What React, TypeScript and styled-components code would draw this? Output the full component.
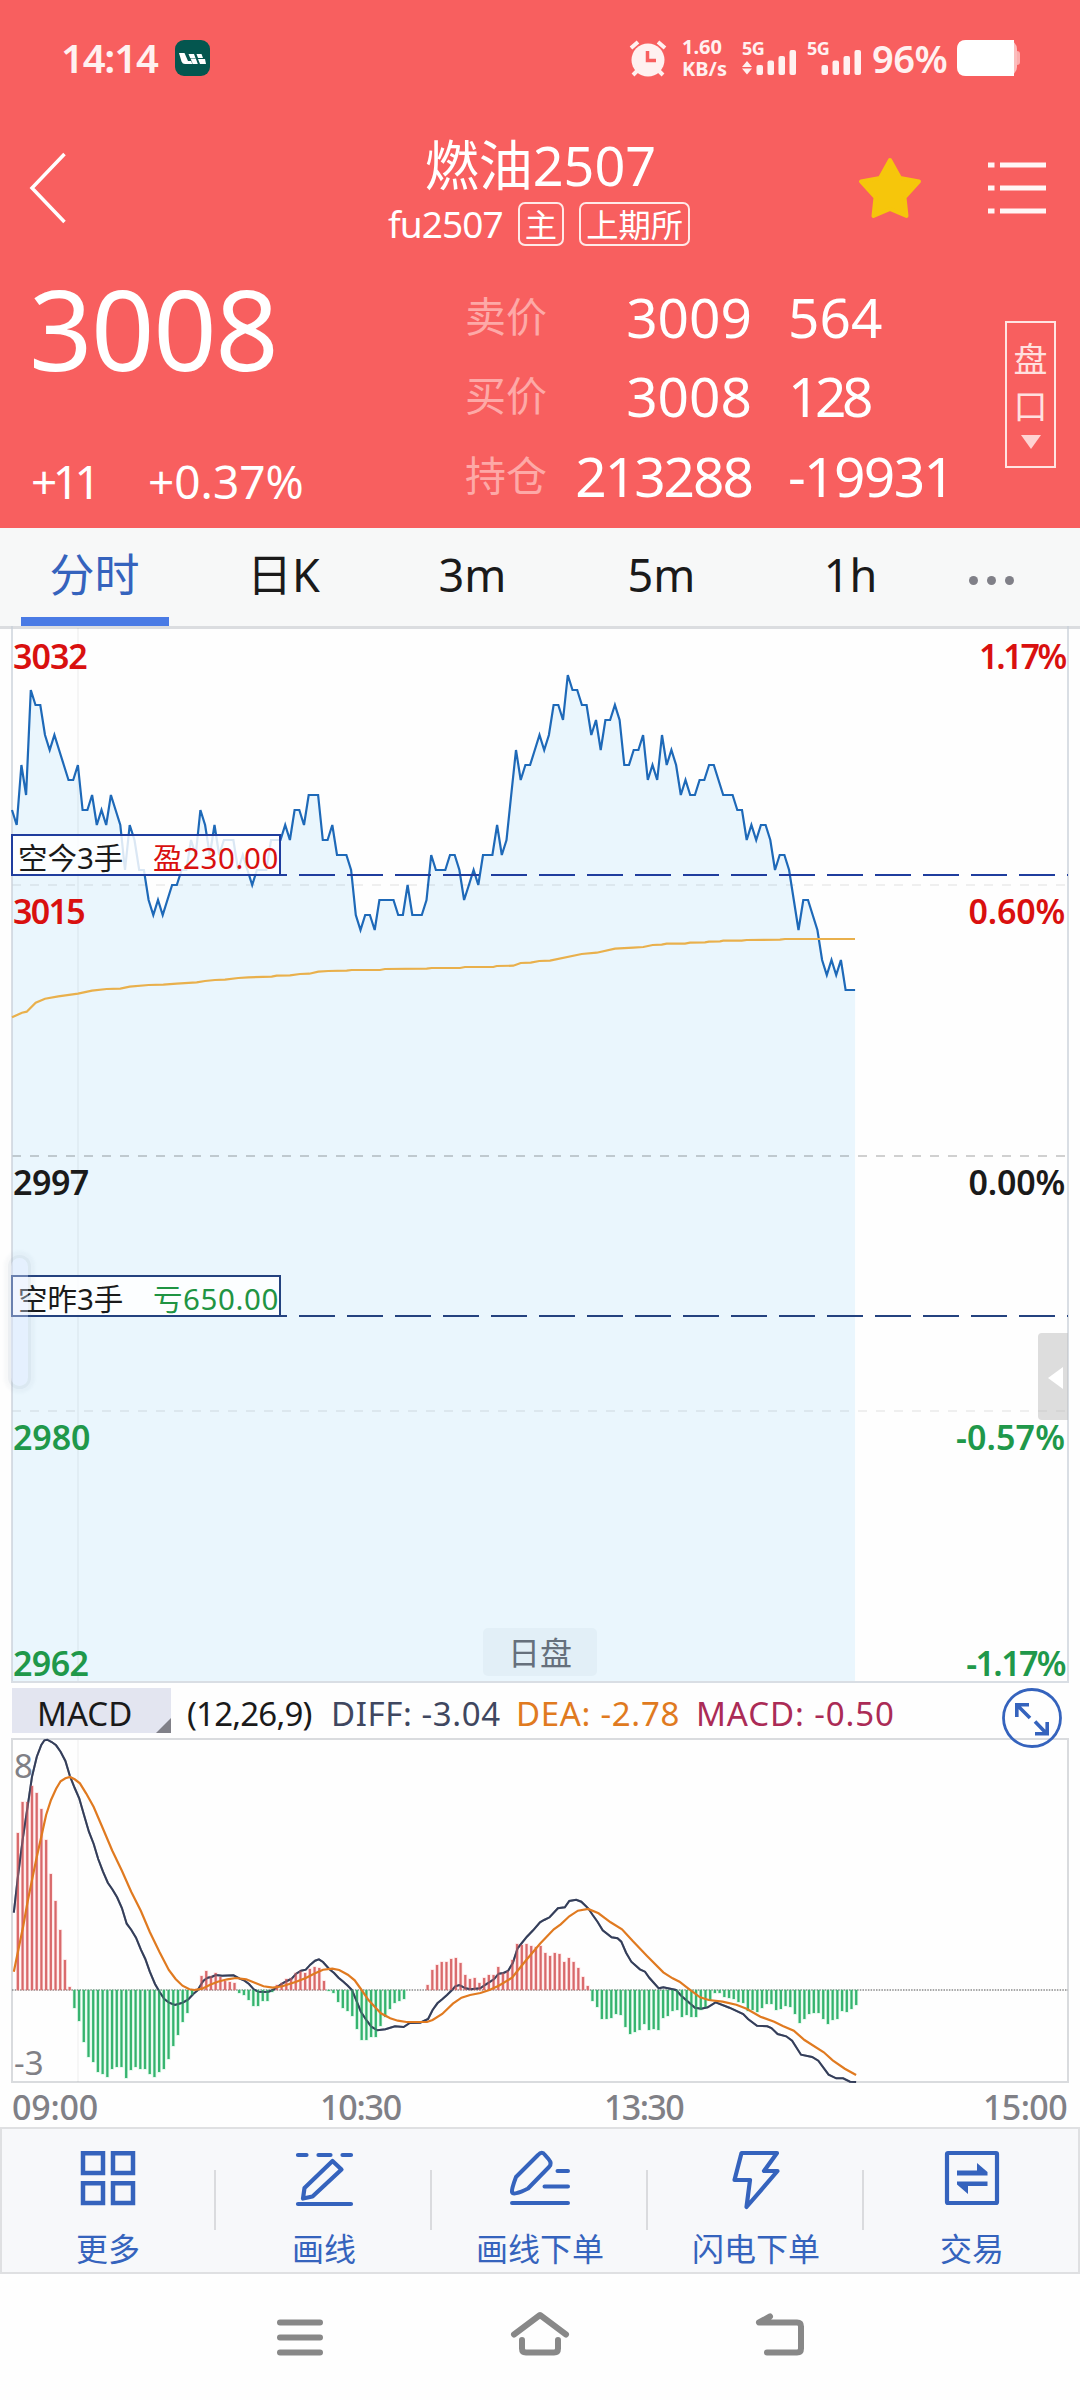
import React from 'react';
import styled, { createGlobalStyle } from 'styled-components';

const sans = '"Noto Sans", "Noto Sans CJK SC", sans-serif';
const red = '#f85f5f';
const blue = '#3563bd';

const GlobalStyle = createGlobalStyle`
  * { box-sizing: border-box; }
  body { margin: 0; background: #fff; font-family: ${sans}; }
`;

const Screen = styled.div`
  width: 1080px;
  height: 2400px;
  display: flex;
  flex-direction: column;
  background: #fefefe;
  overflow: hidden;
  white-space: nowrap;
`;

const Header = styled.header`
  height: 528px;
  flex: none;
  background: ${red};
  color: #fff;
`;

/* ---------- status bar ---------- */

const StatusBar = styled.div`
  height: 116px;
  padding: 0 60px 0 61px;
  display: flex;
  align-items: center;
  color: #fff1f0;
`;

const Clock = styled.div`
  width: 114px;
  font-size: 40px;
  line-height: 44px;
  font-weight: 600;
  letter-spacing: -1.2px;
`;

const StatusIcons = styled.div`
  margin-left: auto;
  display: flex;
  align-items: center;
`;

const NetSpeed = styled.div`
  width: 44px;
  margin: 0 16px 0 15px;
  display: flex;
  flex-direction: column;
  font-size: 20px;
  line-height: 22px;
  font-weight: 700;
`;

const Signal = styled.div`
  width: 55px;
  height: 38px;
  margin-right: 10px;
  display: flex;
  flex-direction: column;
`;

const SignalLabel = styled.span`
  font-size: 18px;
  line-height: 18px;
  height: 10px;
  font-weight: 700;
  letter-spacing: -0.5px;
`;

const Percent = styled.div`
  width: 85px;
  font-size: 38px;
  line-height: 40px;
  font-weight: 600;
  letter-spacing: -0.5px;
`;

/* ---------- title ---------- */

const TitleBar = styled.div`
  height: 143px;
  padding: 0 34px 0 29px;
  display: grid;
  grid-template-columns: 1fr auto 1fr;
  align-items: center;
`;

const Titles = styled.div`
  display: flex;
  flex-direction: column;
  align-items: center;
  gap: 6px;
  padding: 5px 0 0 5px;
`;

const Title = styled.h1`
  margin: 0 0 0 1px;
  font-size: 54px;
  line-height: 61px;
  font-weight: 400;
`;

const Subtitle = styled.div`
  display: flex;
  align-items: center;
  gap: 15px;
  height: 44px;
  margin-right: 2px;
  font-size: 37px;
  line-height: 44px;
  letter-spacing: -0.9px;
`;

const Badge = styled.span`
  height: 44px;
  padding: 0 5px;
  border: 2px solid #ffe9e8;
  border-radius: 7px;
  font-size: 32.3px;
  line-height: 40px;
  letter-spacing: 0;
`;

const TitleActions = styled.div`
  display: flex;
  justify-content: flex-end;
  align-items: center;
  gap: 66px;
`;

/* ---------- quote ---------- */

const Quote = styled.div`
  height: 269px;
  padding: 0 24px 0 31px;
  display: grid;
  grid-template-columns: 434px 540px 51px;
`;

const PriceColumn = styled.div`
  display: flex;
  flex-direction: column;
`;

const LastPrice = styled.div`
  font-size: 111px;
  line-height: 120px;
  margin: 9px 0 0 -2px;
  letter-spacing: -1.4px;
`;

const Changes = styled.div`
  display: flex;
  margin-top: 63px;
  font-size: 46px;
  line-height: 60px;
`;

const Change = styled.span<{ $width?: number; $tracking?: number }>`
  width: ${(p) => (p.$width ? `${p.$width}px` : 'auto')};
  letter-spacing: ${(p) => p.$tracking ?? 0}px;
`;

const QuoteRows = styled.div`
  padding-top: 18px;
  display: grid;
  grid-template-rows: 79px 79px 81px;
`;

const QuoteRow = styled.div`
  display: grid;
  grid-template-columns: 100px 187px 1fr;
  align-items: center;
  font-size: 55px;
  line-height: 60px;
`;

const QuoteLabel = styled.span`
  font-size: 41px;
  line-height: 50px;
  padding-bottom: 2px;
  color: #fda9a7;
`;

const QuoteValue = styled.span<{ $tracking?: number }>`
  text-align: right;
  letter-spacing: ${(p) => p.$tracking ?? 0}px;
`;

const QuoteVolume = styled.span<{ $tracking?: number }>`
  padding-left: 36px;
  letter-spacing: ${(p) => p.$tracking ?? 0}px;
`;

const DepthButton = styled.button`
  margin: 62px 0 0;
  padding: 13px 0 0;
  width: 51px;
  height: 147px;
  border: 2px solid #ffe4e3;
  background: none;
  color: #ffe0df;
  font-family: inherit;
  font-size: 34px;
  line-height: 47px;
  display: flex;
  flex-direction: column;
  align-items: center;
`;

const DownTriangle = styled.i`
  margin-top: 5px;
  border: 10px solid transparent;
  border-top: 14px solid #ffd3d2;
  border-bottom: 0;
`;

/* ---------- tabs ---------- */

const Tabs = styled.nav`
  height: 98px;
  flex: none;
  display: grid;
  grid-template-columns: repeat(5, 189px) 93px;
  background: #f7f8f8;
`;

const Tab = styled.div<{ $active?: boolean }>`
  display: flex;
  flex-direction: column;
  align-items: center;
  justify-content: space-between;
  padding-top: 15px;
  font-size: 45px;
  line-height: 64px;
  color: ${(p) => (p.$active ? blue : '#1a1a1a')};
  &::after {
    content: '';
    width: 148px;
    height: 9px;
    background: ${(p) => (p.$active ? '#4a7be5' : 'transparent')};
  }
`;

const MoreTab = styled.div`
  display: flex;
  align-items: center;
  justify-content: center;
  gap: 9px;
  padding-top: 7px;
`;

const Dot = styled.i`
  width: 9px;
  height: 9px;
  border-radius: 50%;
  background: #808088;
`;

/* ---------- price chart ---------- */

const Chart = styled.section<{ $height: number }>`
  position: relative;
  flex: none;
  height: ${(p) => p.$height}px;
`;

const Plot = styled.svg`
  display: block;
`;

const AxisLabels = styled.div`
  position: absolute;
  inset: 13px 15px 0 13px;
  display: grid;
  grid-template-rows: 255px 271px 255px 226px 40px;
`;

const AxisRow = styled.div<{ $color: string }>`
  display: flex;
  justify-content: space-between;
  font-size: 34px;
  line-height: 34px;
  font-weight: 600;
  color: ${(p) => p.$color};
`;

const AxisText = styled.span<{ $tracking: number }>`
  letter-spacing: ${(p) => p.$tracking - 0.3}px;
`;

const PositionTag = styled.div<{ $top: number; $color: string }>`
  position: absolute;
  left: 11px;
  top: ${(p) => p.$top}px;
  width: 270px;
  height: 42px;
  display: flex;
  justify-content: space-between;
  padding: 2px 0 0 5px;
  border: 2px solid ${(p) => p.$color};
  background: rgba(255, 255, 255, 0.84);
  font-size: 29.5px;
  line-height: 40px;
  color: #1a1a1a;
`;

const Profit = styled.span<{ $color: string }>`
  letter-spacing: 0.6px;
  color: ${(p) => p.$color};
`;

const SessionTag = styled.div`
  position: absolute;
  left: 483px;
  bottom: 8px;
  width: 114px;
  height: 48px;
  border-radius: 5px;
  background: #e2eff7;
  color: #66707c;
  font-size: 32px;
  line-height: 50px;
  text-align: center;
`;

const PanelHandle = styled.div`
  position: absolute;
  right: 12px;
  top: 707px;
  width: 30px;
  height: 87px;
  border-radius: 4px 0 0 4px;
  background: rgba(190, 190, 190, 0.52);
  display: flex;
  align-items: center;
  justify-content: center;
  padding-left: 4px;
  padding-top: 2px;
`;

const LeftTriangle = styled.i`
  border: 11px solid transparent;
  border-right: 15px solid #fff;
  border-left: 0;
`;

const EdgeHandle = styled.div`
  position: absolute;
  left: 11px;
  top: 632px;
  width: 17px;
  height: 128px;
  border-radius: 9px;
  background: rgba(222, 232, 254, 0.38);
  box-shadow: 0 0 0 3px rgba(120, 140, 160, 0.08), 0 0 3px 7px rgba(120, 140, 160, 0.05);
`;

/* ---------- MACD ---------- */

const IndicatorBar = styled.div`
  position: relative;
  flex: none;
  height: 54px;
  padding: 4px 0 5px 12px;
  display: flex;
  font-size: 33px;
  line-height: 52px;
`;

const IndicatorButton = styled.div`
  width: 159px;
  height: 45px;
  padding-left: 25px;
  background: #e3e5f0;
  color: #1a1a1a;
  display: flex;
  justify-content: space-between;
`;

const CornerTriangle = styled.i`
  align-self: flex-end;
  border-bottom: 15px solid #808088;
  border-left: 15px solid transparent;
`;

const IndicatorValue = styled.span<{ $color: string; $width: number; $tracking: number }>`
  width: ${(p) => p.$width}px;
  letter-spacing: ${(p) => p.$tracking}px;
  color: ${(p) => p.$color};
`;

const ParamValue = styled(IndicatorValue)`
  padding-left: 16px;
`;

const ExpandButton = styled.div`
  position: absolute;
  left: 1001px;
  top: 3px;
  z-index: 1;
`;

const ScaleLabels = styled.div`
  position: absolute;
  inset: 11px auto 4px 14px;
  display: flex;
  flex-direction: column;
  justify-content: space-between;
  font-size: 33px;
  line-height: 34px;
  color: #808086;
`;

const TimeAxis = styled.div`
  flex: none;
  height: 43px;
  padding: 2px 13px 0 12px;
  display: grid;
  grid-template-columns: 308px 284px 1fr auto;
  font-size: 34px;
  line-height: 43px;
  font-weight: 500;
  color: #808086;
`;

const TimeLabel = styled.span<{ $tracking: number }>`
  letter-spacing: ${(p) => p.$tracking}px;
`;

/* ---------- bottom bars ---------- */

const Toolbar = styled.nav`
  flex: none;
  height: 147px;
  box-shadow: inset 0 0 0 2px #dfe0e2;
  background: #f7f8fa;
  display: grid;
  grid-template-columns: repeat(5, 1fr);
`;

const Tool = styled.div`
  display: flex;
  flex-direction: column;
  align-items: center;
  padding-top: 19px;
  color: ${blue};
  font-size: 32px;
  line-height: 40px;
  background: linear-gradient(#dadbde, #dadbde) right 43px / 2px 60px no-repeat;
  &:last-child { background: none; }
`;

const ToolLabel = styled.span`
  margin-top: 17px;
`;

const SystemNav = styled.div`
  flex: 1;
  display: grid;
  grid-template-columns: repeat(3, 240px);
  justify-content: center;
  justify-items: center;
  padding-top: 32px;
`;

/* ---------- data ---------- */

const LEFT = 12;
const STEP = 1055 / 224;

/* ticks below the session high (3029), one per minute */
const ticks = [
  9, 10, 6, 8, 1, 2, 2, 4, 5, 4, 5, 6, 7, 7, 6, 9, 9, 8, 10, 9, 10, 8, 9, 10, 13, 10, 11, 13, 13, 15,
  16, 15, 16, 15, 14, 14, 13, 13, 11, 12, 9, 10, 12, 10, 12, 11, 11, 11, 13, 12, 13, 14, 13, 13, 13, 11, 11, 11, 10, 11,
  9, 9, 10, 8, 8, 8, 11, 11, 10, 12, 12, 12, 13, 16, 17, 16, 16, 17, 15, 15, 15, 15, 16, 16, 14, 16, 16, 16, 15, 12,
  13, 13, 13, 12, 12, 13, 15, 14, 13, 14, 12, 12, 12, 10, 12, 11, 8, 5, 7, 6, 6, 5, 4, 5, 4, 2, 2, 3, 0, 1,
  1, 2, 2, 4, 3, 5, 3, 3, 2, 3, 6, 6, 5, 5, 4, 7, 6, 7, 4, 6, 5, 6, 8, 7, 8, 8, 7, 7, 6, 6,
  7, 8, 8, 8, 9, 9, 11, 10, 11, 10, 10, 11, 13, 12, 12, 13, 15, 17, 15, 15, 16, 17, 19, 20, 19, 20, 19, 21, 21, 21,
];

const average = [
  [36, 1192], [66, 1178], [80, 1175], [107, 1148], [135, 1136], [175, 1129], [234, 1121], [276, 1112], [320, 1107],
  [361, 1106], [389, 1100], [446, 1095], [490, 1094], [530, 1091], [590, 1087], [615, 1083], [645, 1080], [675, 1079],
  [715, 1074], [745, 1072], [815, 1070], [830, 1067], [870, 1066], [900, 1062], [928, 1061], [955, 1055], [985, 1053],
  [1040, 1052], [1055, 1050], [1140, 1050], [1155, 1047], [1280, 1046], [1295, 1044], [1380, 1044], [1395, 1041],
  [1480, 1041], [1490, 1038], [1540, 1037], [1562, 1029], [1592, 1028], [1618, 1023], [1650, 1022], [1745, 1002],
  [1790, 998], [1845, 986], [1900, 983], [1930, 981], [1958, 975], [1985, 974], [2000, 971], [2055, 971], [2070, 968],
  [2115, 967], [2127, 965], [2160, 964], [2170, 962], [2225, 962], [2240, 960], [2340, 959], [2355, 957], [2565, 957],
];

/* histogram heights in pixels, positive above the zero line */
const bars = [
  157, 188, 188, 204, 197, 181, 150, 116, 89, 60, 30, 3, -18, -31, -52, -67, -72, -82, -84, -87, -79, -77, -77, -88,
  -80, -77, -79, -79, -84, -87, -82, -79, -69, -56, -45, -32, -23, -5, 1, 14, 19, 14, 17, 13, 9, 8, 7, -3, -5, -10,
  -16, -16, -11, -11, -2, 5, 7, 11, 12, 17, 19, 17, 21, 23, 22, 9, -1, -3, -12, -18, -21, -26, -39, -50, -50, -47,
  -47, -36, -27, -19, -13, -11, -9, 0, 0, 0, 0, 5, 20, 25, 28, 28, 31, 32, 27, 15, 11, 12, 7, 12, 15, 15, 23, 17, 19,
  30, 46, 45, 46, 44, 43, 44, 37, 34, 37, 36, 28, 32, 28, 22, 13, 4, -11, -17, -29, -29, -28, -24, -25, -37, -44,
  -42, -40, -34, -40, -39, -40, -28, -26, -21, -20, -27, -25, -27, -27, -20, -17, -10, -3, -3, -7, -8, -9, -12, -13,
  -21, -20, -22, -18, -14, -14, -20, -19, -16, -17, -24, -33, -29, -24, -23, -23, -29, -34, -30, -29, -21, -22, -19,
  -15,
];

const diff = [
  [40, 698], [53, 580], [67, 470], [80, 380], [93, 290], [107, 230], [120, 195], [129, 181], [137, 179], [150, 186],
  [163, 196], [176, 215], [190, 243], [203, 288], [217, 324], [230, 355], [244, 405], [258, 455], [272, 492],
  [285, 537], [299, 575], [313, 608], [326, 628], [340, 652], [354, 684], [368, 731], [381, 749], [395, 773],
  [409, 809], [422, 837], [435, 875], [450, 912], [463, 935], [477, 957], [491, 968], [508, 975], [530, 968],
  [546, 959], [562, 941], [573, 932], [590, 903], [603, 893], [614, 891], [627, 885], [645, 887], [678, 886],
  [696, 896], [710, 902], [723, 912], [737, 928], [750, 935], [778, 936], [792, 930], [806, 920], [819, 911],
  [833, 903], [847, 896], [860, 881], [874, 872], [888, 869], [901, 854], [915, 842], [926, 838], [938, 846],
  [956, 867], [970, 879], [983, 893], [997, 905], [1010, 917], [1022, 930], [1035, 962], [1048, 995], [1065, 1022],
  [1078, 1040], [1096, 1051], [1119, 1048], [1147, 1039], [1172, 1041], [1190, 1029], [1220, 1028], [1243, 1017],
  [1256, 990], [1270, 970], [1284, 958], [1298, 945], [1312, 931], [1322, 919], [1334, 915], [1352, 925],
  [1366, 928], [1394, 925], [1410, 914], [1434, 898], [1448, 881], [1462, 879], [1475, 873], [1489, 849],
  [1503, 805], [1530, 770], [1548, 751], [1568, 727], [1580, 720], [1596, 712], [1620, 685], [1640, 682],
  [1653, 663], [1673, 659], [1688, 665], [1708, 685], [1721, 705], [1735, 725], [1750, 751], [1776, 772],
  [1793, 775], [1804, 785], [1818, 818], [1833, 845], [1858, 868], [1873, 875], [1886, 894], [1913, 925],
  [1926, 922], [1963, 930], [1978, 947], [2018, 983], [2036, 986], [2055, 982], [2078, 967], [2118, 983],
  [2158, 1002], [2172, 1017], [2198, 1037], [2228, 1039], [2240, 1044], [2258, 1062], [2283, 1069], [2300, 1082],
  [2326, 1124], [2358, 1131], [2376, 1142], [2406, 1184], [2428, 1195], [2448, 1195], [2468, 1205], [2486, 1206],
];

const dea = [
  [40, 875], [53, 810], [67, 740], [80, 665], [93, 600], [107, 530], [120, 470], [134, 405], [148, 360], [163, 326],
  [176, 304], [190, 295], [203, 291], [217, 298], [232, 310], [250, 340], [272, 381], [299, 446], [326, 512],
  [354, 572], [381, 635], [409, 693], [435, 756], [463, 816], [490, 870], [510, 897], [530, 917], [550, 928],
  [565, 930], [587, 926], [610, 914], [632, 905], [660, 898], [685, 894], [715, 898], [740, 908], [765, 919],
  [792, 923], [820, 919], [860, 905], [888, 894], [915, 880], [938, 869], [965, 866], [985, 870], [1010, 884],
  [1030, 901], [1050, 930], [1070, 960], [1092, 985], [1106, 1000], [1133, 1015], [1155, 1022], [1180, 1026],
  [1240, 1026], [1256, 1020], [1284, 1002], [1315, 971], [1340, 953], [1365, 945], [1395, 939], [1421, 930],
  [1448, 917], [1487, 893], [1503, 872], [1530, 838], [1568, 791], [1608, 748], [1628, 733], [1653, 709],
  [1678, 692], [1708, 687], [1738, 700], [1773, 727], [1806, 748], [1838, 784], [1878, 827], [1926, 877],
  [1953, 895], [1973, 905], [1998, 925], [2033, 952], [2058, 960], [2098, 965], [2138, 974], [2168, 986],
  [2208, 1010], [2248, 1025], [2273, 1038], [2305, 1052], [2336, 1080], [2392, 1117], [2418, 1141], [2453, 1166],
  [2486, 1185],
];

const toLine = (points: number[][], sx: number, sy: number, dy: number) =>
  points.map(([x, y]) => `${(x / sx).toFixed(1)},${(y / sy + dy).toFixed(1)}`).join(' ');

const priceLine = ticks.map((t, i) => `${(LEFT + i * STEP).toFixed(1)},${49 + t * 15}`).join(' ');

const axis = [
  { price: '3032', pct: '1.17%', color: '#d9100f', tracking: [-0.7, -2] },
  { price: '3015', pct: '0.60%', color: '#d9100f', tracking: [-1.4, 0.1] },
  { price: '2997', pct: '0.00%', color: '#1a1a1a', tracking: [-0.2, 0.1] },
  { price: '2980', pct: '-0.57%', color: '#20984a', tracking: [0.2, 0.4] },
  { price: '2962', pct: '-1.17%', color: '#20984a', tracking: [-0.3, -1.3] },
];

/* ---------- icons ---------- */

const SignalBars = ({ arrows }: { arrows?: boolean }) => (
  <svg width="55" height="26" viewBox="0 0 55 26" fill="#fff1f0">
    {arrows && <path d="M5 12l5 6H0zM5 25.500l5-6H0z" />}
    <rect x="14.500" y="16" width="6.500" height="10" rx="2" />
    <rect x="25.500" y="11.500" width="6.500" height="14.500" rx="2" />
    <rect x="36.500" y="7" width="6.500" height="19" rx="2" />
    <rect x="47.500" y="1" width="6.500" height="25" rx="2" />
  </svg>
);

const ToolIcons: Record<string, React.ReactNode> = {
  grid: <path d="M27 7.200h20v19.800H27zM57 7.200h20v19.800H57zM27 37.200h20v19.800H27zM57 37.200h20v19.800H57z" strokeWidth="4.500" />,
  draw: (
    <path
      d="M26 9h8.500M46.500 9h12M70.500 9H79M26 58h53M31 52.500l1.500-10.500L60.500 15l9 8.500L40.500 50.500z"
      strokeWidth="4.200"
    />
  ),
  drawOrder: (
    <path
      d="M24 57h56M69.500 25H80M56.500 40.500H80M24 46q-.5-3 4-15L50 9q4-4.500 7 0l3.500 4q4 4.500 .5 8L40 42.500Q25 50 24 46z"
      strokeWidth="4"
    />
  ),
  flash: <path d="M37.500 7H73L60 25h13.500L42.500 61l3.500-27H30.500z" strokeWidth="4.200" />,
  trade: (
    <>
      <rect x="27" y="7" width="50" height="50" rx="1" strokeWidth="4.200" />
      <path d="M37 24.500h20v-7.500L67.500 26v3.500H37zM67.500 40H48v8L37 38.500V35.500h30.500z" fill={blue} stroke="none" />
    </>
  ),
};

const tools = [
  { icon: 'grid', label: '更多' },
  { icon: 'draw', label: '画线' },
  { icon: 'drawOrder', label: '画线下单' },
  { icon: 'flash', label: '闪电下单' },
  { icon: 'trade', label: '交易' },
];

const navIcons = [
  'M10 16.500h40M10 31.500h40M10 46.500h40',
  'M4 28.500L30 9l26 19.500M12 34v8.500q0 4 4 4h28q4 0 4-4V34',
  'M20 10.500L9 16.500h38q4 0 4 4v22q0 4-4 4H17',
];

export default function App() {
  return (
    <>
      <GlobalStyle />
      <Screen>
        <Header>
          <StatusBar>
            <Clock>14:14</Clock>
            <svg width="35" height="36" viewBox="0 0 35 36">
              <rect width="35" height="36" rx="9" fill="#04564f" />
              <path
                d="M4 13h5.500l3.500 8h3l1.500 3H10q-2.500 0-3.500-2.500zM13.500 14h5.500l1.500 4h-5.300zM15.500 18.500h5.300l2 5.500h-5zM21.500 14h5l1.500 4h-5zM23 19h7l1 5h-6z"
                fill="#fff"
              />
            </svg>
            <StatusIcons>
              <svg width="38" height="37" viewBox="0 0 38 37" fill="none" stroke="#fff1f0">
                <circle cx="19" cy="20" r="16.500" fill="#fff1f0" stroke="none" />
                <path d="M2 8l7-6M36 8l-7-6M9 30l-5 5M29 30l5 5" strokeWidth="4" />
                <path d="M18.500 11v9.500H27" stroke={red} strokeWidth="3.500" />
              </svg>
              <NetSpeed>
                <span>1.60</span>
                <span>KB/s</span>
              </NetSpeed>
              <Signal>
                <SignalLabel>5G</SignalLabel>
                <SignalBars arrows />
              </Signal>
              <Signal>
                <SignalLabel>5G</SignalLabel>
                <SignalBars />
              </Signal>
              <Percent>96%</Percent>
              <svg width="63" height="36" viewBox="0 0 63 36">
                <rect x="52" y="11" width="11" height="14" rx="3" fill="#fcaeae" />
                <rect width="60" height="36" rx="9" fill="#fcbdbd" />
                <path d="M9 0h48v36H9q-9 0-9-9V9q0-9 9-9z" fill="#fff" />
              </svg>
            </StatusIcons>
          </StatusBar>

          <TitleBar>
            <svg width="38" height="72" viewBox="0 0 38 72" fill="none" stroke="#fff" strokeWidth="3.500">
              <path d="M35.500 2L3 36l32.500 34" />
            </svg>
            <Titles>
              <Title>燃油2507</Title>
              <Subtitle>
                fu2507<Badge>主</Badge>
                <Badge>上期所</Badge>
              </Subtitle>
            </Titles>
            <TitleActions>
              <svg width="64" height="62" viewBox="0 0 64 62">
                <path
                  d="M32 3l10 18 19 3.500-14.500 16L48.500 59 32 52 15.500 59l2-18.500L3 24.500 22 21z"
                  fill="#f6c60b"
                  stroke="#f6c60b"
                  strokeWidth="4"
                  strokeLinejoin="round"
                />
              </svg>
              <svg width="58" height="52" viewBox="0 0 58 52" stroke="#fff6f5" strokeWidth="5">
                <path d="M0 3h6.500M12 3h46M0 26h6.500M12 26h46M0 49h6.500M12 49h46" />
              </svg>
            </TitleActions>
          </TitleBar>

          <Quote>
            <PriceColumn>
              <LastPrice>3008</LastPrice>
              <Changes>
                <Change $width={117} $tracking={-4.5}>
                  +11
                </Change>
                <Change>+0.37%</Change>
              </Changes>
            </PriceColumn>
            <QuoteRows>
              <QuoteRow>
                <QuoteLabel>卖价</QuoteLabel>
                <QuoteValue>3009</QuoteValue>
                <QuoteVolume>564</QuoteVolume>
              </QuoteRow>
              <QuoteRow>
                <QuoteLabel>买价</QuoteLabel>
                <QuoteValue>3008</QuoteValue>
                <QuoteVolume $tracking={-4.5}>128</QuoteVolume>
              </QuoteRow>
              <QuoteRow>
                <QuoteLabel>持仓</QuoteLabel>
                <QuoteValue $tracking={-2}>213288</QuoteValue>
                <QuoteVolume $tracking={-1.6}>-19931</QuoteVolume>
              </QuoteRow>
            </QuoteRows>
            <DepthButton>
              <span>盘</span>
              <span>口</span>
              <DownTriangle />
            </DepthButton>
          </Quote>
        </Header>

        <Tabs>
          <Tab $active>分时</Tab>
          <Tab>日K</Tab>
          <Tab>3m</Tab>
          <Tab>5m</Tab>
          <Tab>1h</Tab>
          <MoreTab>
            <Dot />
            <Dot />
            <Dot />
          </MoreTab>
        </Tabs>

        <Chart $height={1058}>
          <Plot width="1080" height="1058" viewBox="0 0 1080 1058" fill="none">
            <path d="M0 1.500h1080" stroke="#dbdde0" strokeWidth="3" />
            <polygon points={`12,1055 ${priceLine} ${LEFT + 179 * STEP},1055`} fill="#eaf6fd" />
            <path d="M12 259h1056M12 785h1056" stroke="#000" strokeOpacity=".06" strokeWidth="2" strokeDasharray="9 9" />
            <path d="M12 530h1056" stroke="#000" strokeOpacity=".18" strokeWidth="2" strokeDasharray="9 9" />
            <path d="M78 2v1053" stroke="#000" strokeOpacity=".035" strokeWidth="2" />
            <path d="M12 0v1056h1056V0" stroke="#c9d0d8" strokeOpacity=".7" strokeWidth="2" />
            <polyline points={priceLine} stroke="#1e69b8" strokeWidth="2.200" />
            <polyline points={toLine(average, 3, 3, -6)} stroke="#e9b04c" strokeWidth="2.200" />
            <path d="M11 249h1057" stroke="#1f3d9e" strokeWidth="2" strokeDasharray="36 12" />
            <path d="M11 690h1057" stroke="#24427f" strokeWidth="2" strokeDasharray="36 12" />
          </Plot>
          <AxisLabels>
            {axis.map((row) => (
              <AxisRow key={row.price} $color={row.color}>
                <AxisText $tracking={row.tracking[0]}>{row.price}</AxisText>
                <AxisText $tracking={row.tracking[1]}>{row.pct}</AxisText>
              </AxisRow>
            ))}
          </AxisLabels>
          <PositionTag $top={208} $color="#1f3d9e">
            <span>空今3手</span>
            <Profit $color="#d9100f">盈230.00</Profit>
          </PositionTag>
          <PositionTag $top={649} $color="#24427f">
            <span>空昨3手</span>
            <Profit $color="#1f9443">亏650.00</Profit>
          </PositionTag>
          <SessionTag>日盘</SessionTag>
          <PanelHandle>
            <LeftTriangle />
          </PanelHandle>
          <EdgeHandle />
        </Chart>

        <IndicatorBar>
          <IndicatorButton>
            MACD
            <CornerTriangle />
          </IndicatorButton>
          <ParamValue $color="#1a1a1a" $width={160} $tracking={-0.8}>
            (12,26,9)
          </ParamValue>
          <IndicatorValue $color="#3f4760" $width={185} $tracking={0.6}>
            DIFF: -3.04
          </IndicatorValue>
          <IndicatorValue $color="#e07a20" $width={180} $tracking={0.7}>
            DEA: -2.78
          </IndicatorValue>
          <IndicatorValue $color="#ab2b56" $width={200} $tracking={0.9}>
            MACD: -0.50
          </IndicatorValue>
          <ExpandButton>
            <svg width="62" height="62" viewBox="0 0 62 62" fill="none" stroke={blue}>
              <circle cx="31" cy="31" r="28.500" strokeWidth="2.800" />
              <path d="M29 31L16.500 18.500M28 17.800H15.800V30M34 34.500L45 46M34 46.800h12.200V35" strokeWidth="3.600" />
            </svg>
          </ExpandButton>
        </IndicatorBar>

        <Chart $height={346}>
          <Plot width="1080" height="346" viewBox="0 1738 1080 346" fill="none">
            <path d="M12 1739h1056v343H12z" stroke="#d9dbde" strokeWidth="2" />
            <path d="M78 1740v342" stroke="#000" strokeOpacity=".03" strokeWidth="2" />
            <path d="M12 1990h1056" stroke="#8a8a8a" strokeWidth="1.500" strokeDasharray="1.500 1.200" />
            <polyline points={toLine(diff, 2.9037, 3, 1680)} stroke="#343e5a" strokeWidth="2" />
            {bars.map((h, i) => (
              <rect
                key={i}
                x={12 + (i + 1) * STEP}
                y={h > 0 ? 1990 - h : 1990}
                width="2.300"
                height={Math.abs(h)}
                fill={h > 0 ? '#d4696b' : '#35ae6c'}
                stroke={h > 0 ? '#ff8080' : '#50e090'}
                strokeOpacity=".2"
                strokeWidth={h === 0 ? 0 : 1.6}
              />
            ))}
            <polyline points={toLine(diff, 2.9037, 3, 1680)} stroke="#343e5a" strokeOpacity=".5" strokeWidth="2" />
            <polyline points={toLine(dea, 2.9037, 3, 1680)} stroke="#e07a20" strokeWidth="2.200" />
          </Plot>
          <ScaleLabels>
            <span>8</span>
            <span>-3</span>
          </ScaleLabels>
        </Chart>

        <TimeAxis>
          <TimeLabel $tracking={-0.2}>09:00</TimeLabel>
          <TimeLabel $tracking={-1.2}>10:30</TimeLabel>
          <TimeLabel $tracking={-1.6}>13:30</TimeLabel>
          <TimeLabel $tracking={-0.6}>15:00</TimeLabel>
        </TimeAxis>

        <Toolbar>
          {tools.map((tool) => (
            <Tool key={tool.icon}>
              <svg
                width="104"
                height="66"
                viewBox="0 0 104 66"
                fill="none"
                stroke={blue}
                strokeLinecap="round"
                strokeLinejoin={tool.icon === 'grid' ? 'miter' : 'round'}
              >
                {ToolIcons[tool.icon]}
              </svg>
              <ToolLabel>{tool.label}</ToolLabel>
            </Tool>
          ))}
        </Toolbar>

        <SystemNav>
          {navIcons.map((d) => (
            <svg
              key={d}
              width="60"
              height="60"
              viewBox="0 0 60 60"
              fill="none"
              stroke="#888"
              strokeWidth="6"
              strokeLinecap="round"
              strokeLinejoin="round"
            >
              <path d={d} />
            </svg>
          ))}
        </SystemNav>
      </Screen>
    </>
  );
}
